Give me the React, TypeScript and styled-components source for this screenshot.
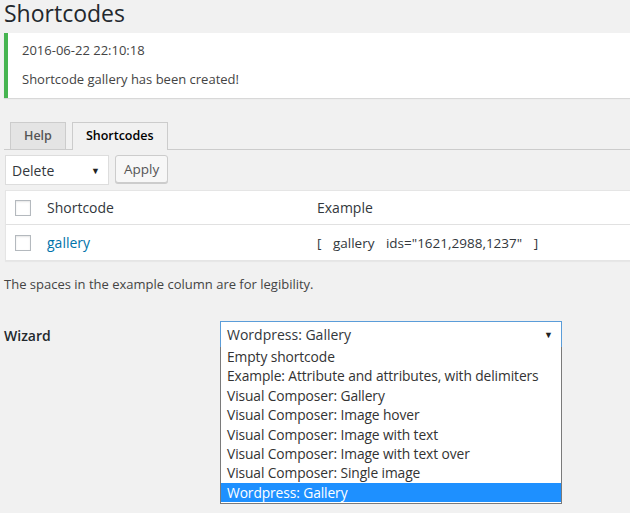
import React from "react";
import styled, { createGlobalStyle } from "styled-components";

const Global = createGlobalStyle`
  body { margin: 0; background: #f1f1f1; font-family: "Open Sans", sans-serif; font-size: 13px; color: #444; }
`;

const Page = styled.div`
  padding: 0 0 0 4px;
  min-height: 513px;
  box-sizing: border-box;
`;

const Title = styled.h1`
  margin: -5px 0 0 0;
  font-size: 23px;
  font-weight: 400;
  color: #23282d;
  line-height: 36px;
`;

const Notice = styled.div`
  margin-top: 2px;
  background: #fff;
  border-left: 4px solid #46b450;
  box-shadow: 0 1px 1px rgba(0, 0, 0, 0.1);
  padding: 8px 14px 6px;
  height: 51px;
  p { margin: 0 0 10px; line-height: 19px; }
`;

const Tabs = styled.div`
  margin-top: 24px;
  display: flex;
  gap: 6px;
  padding-left: 6px;
  border-bottom: 1px solid #ccc;
`;

const Tab = styled.div<{ $active?: boolean }>`
  padding: 4px 13px;
  font-weight: 600;
  font-size: 12.5px;
  line-height: 18px;
  border: 1px solid #ccc;
  border-bottom: none;
  margin-bottom: ${(p) => (p.$active ? "-1px" : "0")};
  background: ${(p) => (p.$active ? "#f1f1f1" : "#e4e4e4")};
  color: ${(p) => (p.$active ? "#000" : "#555")};
  padding-bottom: ${(p) => (p.$active ? "5px" : "4px")};
`;

const Actions = styled.div`
  display: flex;
  gap: 6px;
  margin-top: 5px;
  padding-left: 1px;
`;

const Select = styled.div<{ $w: number; $focus?: boolean }>`
  width: ${(p) => p.$w}px;
  box-sizing: border-box;
  height: ${(p) => (p.$focus ? 27 : 30)}px;
  background: #fff;
  border: 1px solid ${(p) => (p.$focus ? "#5b9dd9" : "#ddd")};
  display: flex;
  align-items: center;
  justify-content: space-between;
  padding: 0 8px 0 6px;
  font-size: 14px;
  color: #32373c;
  &::after { content: "▼"; font-size: 9px; color: #222; }
`;

const Button = styled.div`
  border: 1px solid #ccc;
  background: #f7f7f7;
  box-shadow: 0 1px 0 #ccc;
  border-radius: 3px;
  height: 26px;
  padding: 0 8px;
  display: flex;
  align-items: center;
  font-size: 13.5px;
  color: #555;
`;

const Table = styled.div`
  margin-top: 5px;
  margin-left: 1px;
  background: #fff;
  border: 1px solid #e5e5e5;
  border-right: none;
  box-shadow: 0 1px 1px rgba(0, 0, 0, 0.04);
`;

const Row = styled.div<{ $head?: boolean }>`
  display: grid;
  grid-template-columns: 41px 270px 1fr;
  align-items: center;
  height: ${(p) => (p.$head ? 33 : 35)}px;
  border-bottom: ${(p) => (p.$head ? "1px solid #e1e1e1" : "none")};
  font-size: 14px;
  color: #32373c;
`;

const Check = styled.span`
  width: 16px;
  height: 16px;
  border: 1px solid #b4b9be;
  margin-left: 9px;
  box-sizing: border-box;
  box-shadow: inset 0 1px 2px rgba(0, 0, 0, 0.1);
`;

const Link = styled.span`
  color: #0073aa;
`;

const Code = styled.span`
  word-spacing: 8px;
  font-size: 13.5px;
`;

const Note = styled.p`
  margin: 14px 0 0 0;
  font-size: 13px;
`;

const Wizard = styled.div`
  margin-top: 28px;
  display: grid;
  grid-template-columns: 216px 1fr;
  position: relative;
`;

const Label = styled.div`
  font-weight: 600;
  font-size: 14px;
  color: #23282d;
  padding-top: 5px;
`;

const Desc = styled.p`
  margin: 4px 0 0;
  font-size: 13px;
`;

const Primary = styled.div`
  margin-top: 16px;
  width: 70px;
  height: 28px;
  background: #0085ba;
  border-radius: 3px;
`;

const List = styled.ul`
  position: absolute;
  z-index: 2;
  left: 216px;
  top: 26px;
  width: 342px;
  box-sizing: border-box;
  margin: 0;
  padding: 0 0 1px;
  list-style: none;
  background: #fff;
  border: 1px solid #7a7a7a;
  border-top: none;
`;

const Option = styled.li<{ $sel?: boolean }>`
  height: 19.4px;
  line-height: 19px;
  padding-left: 6px;
  font-size: 13.8px;
  letter-spacing: -0.1px;
  background: ${(p) => (p.$sel ? "#1e90ff" : "#fff")};
  color: ${(p) => (p.$sel ? "#fff" : "#333")};
`;

const options = [
  "Empty shortcode",
  "Example: Attribute and attributes, with delimiters",
  "Visual Composer: Gallery",
  "Visual Composer: Image hover",
  "Visual Composer: Image with text",
  "Visual Composer: Image with text over",
  "Visual Composer: Single image",
  "Wordpress: Gallery",
];

export default function App() {
  return (
    <Page>
      <Global />
      <Title>Shortcodes</Title>
      <Notice>
        <p>2016-06-22 22:10:18</p>
        <p>Shortcode gallery has been created!</p>
      </Notice>
      <Tabs>
        <Tab>Help</Tab>
        <Tab $active>Shortcodes</Tab>
      </Tabs>
      <Actions>
        <Select $w={104}>Delete</Select>
        <Button>Apply</Button>
      </Actions>
      <Table>
        <Row $head>
          <Check />
          <span>Shortcode</span>
          <span>Example</span>
        </Row>
        <Row>
          <Check />
          <Link>gallery</Link>
          <Code>[ gallery ids="1621,2988,1237" ]</Code>
        </Row>
      </Table>
      <Note>The spaces in the example column are for legibility.</Note>
      <Wizard>
        <Label>Wizard</Label>
        <div>
          <Select $w={342} $focus>Wordpress: Gallery</Select>
          <Desc>Select a template to base your new shortcode.</Desc>
          <Primary />
        </div>
        <List>
          {options.map((o, i) => (
            <Option key={o} $sel={i === options.length - 1}>{o}</Option>
          ))}
        </List>
      </Wizard>
    </Page>
  );
}
